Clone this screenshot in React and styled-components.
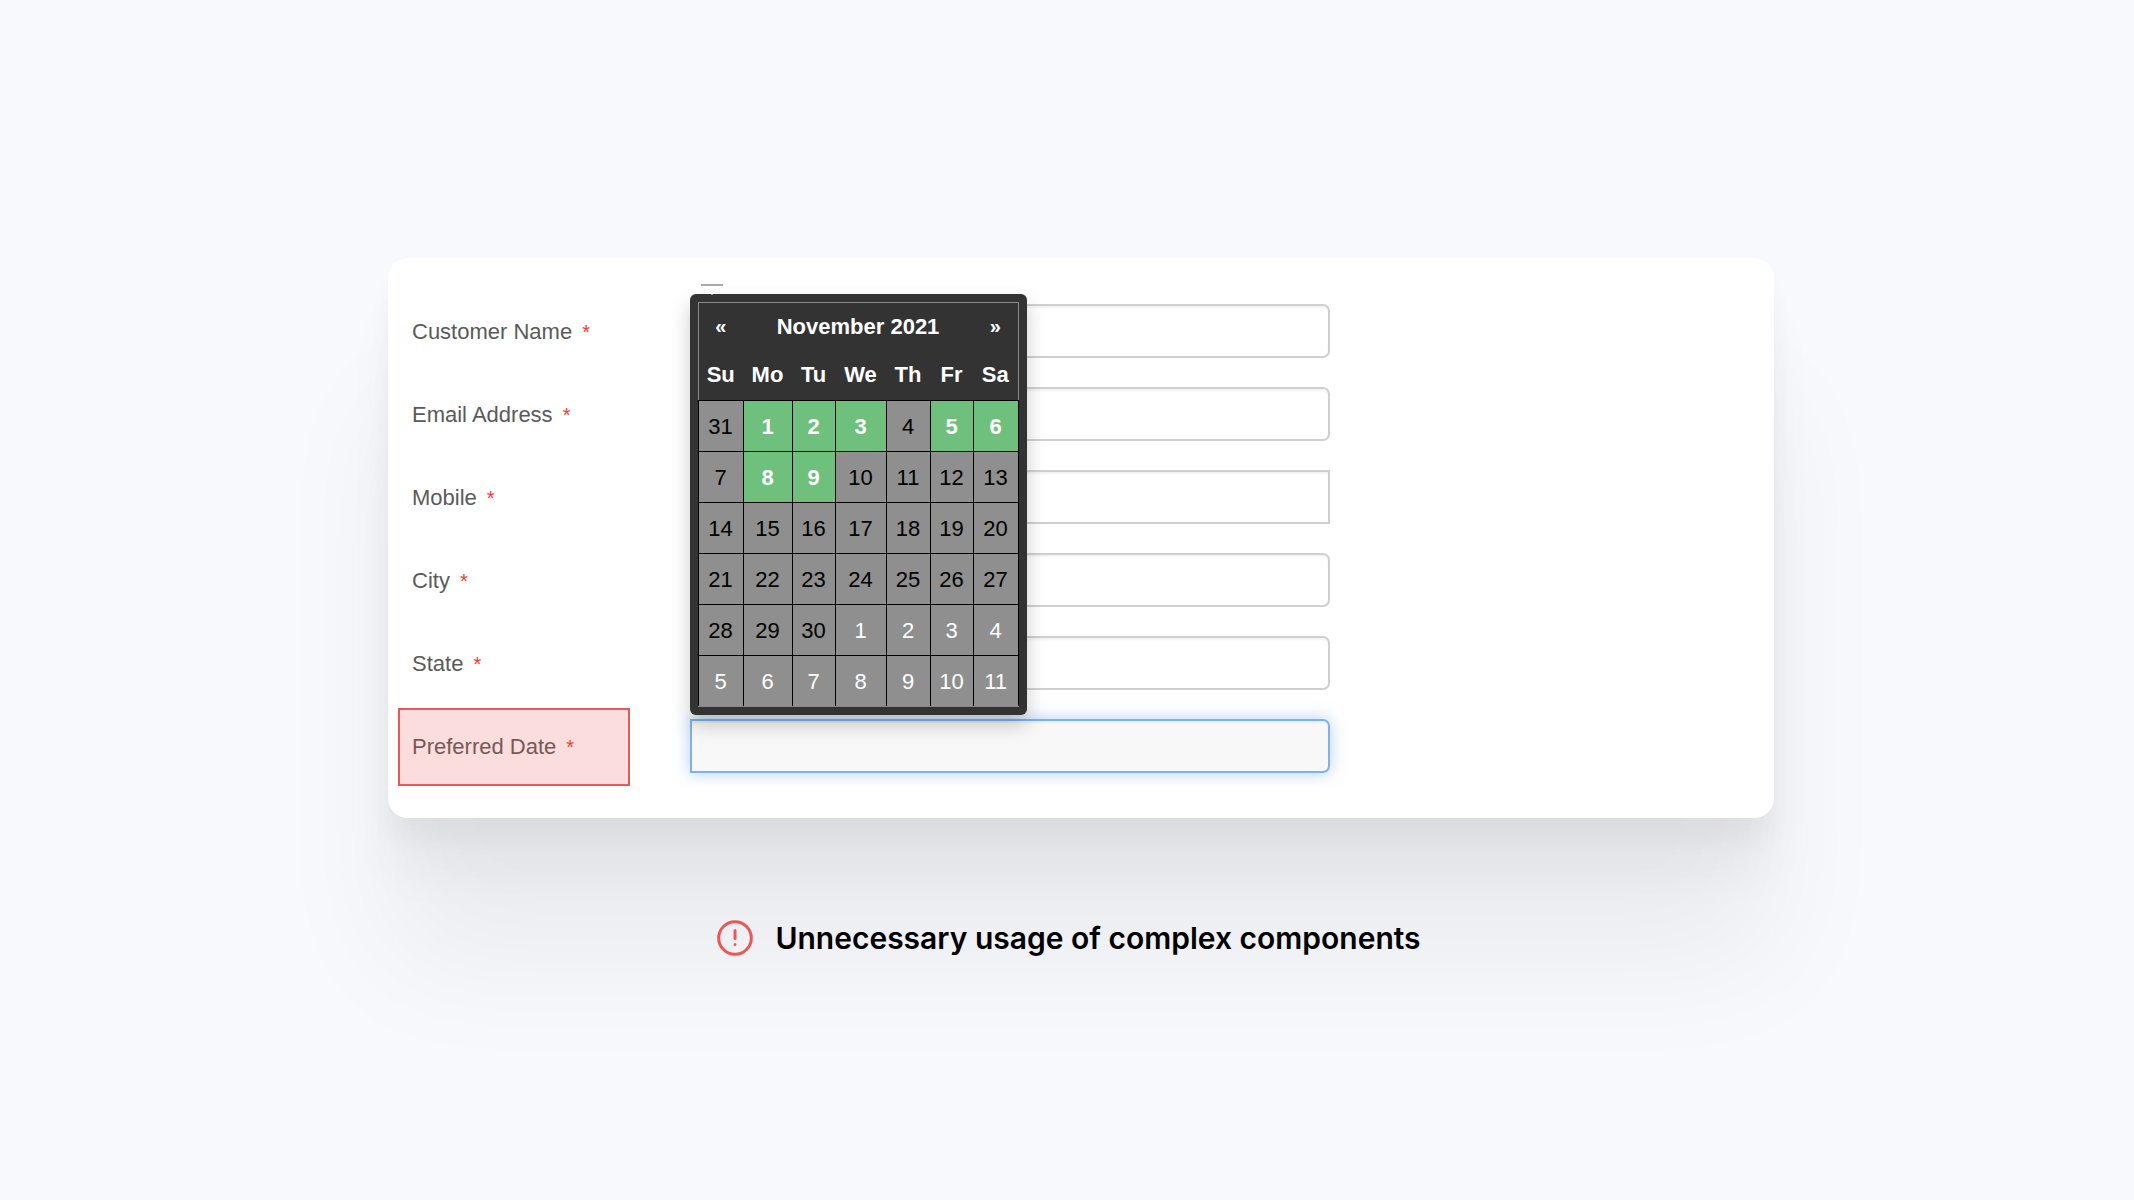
import { useState } from "react";
import styled, { createGlobalStyle, css } from "styled-components";

const FIELDS = [
  { id: "name", label: "Customer Name", type: "text" },
  { id: "email", label: "Email Address", type: "email" },
  { id: "mobile", label: "Mobile", type: "tel", square: true },
  { id: "city", label: "City", type: "text" },
  { id: "state", label: "State", type: "text" },
  { id: "date", label: "Preferred Date", type: "text", active: true },
];

const WEEKDAYS = [
  { name: "Su", width: 45 },
  { name: "Mo", width: 49 },
  { name: "Tu", width: 43 },
  { name: "We", width: 51 },
  { name: "Th", width: 44 },
  { name: "Fr", width: 43 },
  { name: "Sa", width: 45 },
];

const WEEKS = [
  [31, 1, 2, 3, 4, 5, 6],
  [7, 8, 9, 10, 11, 12, 13],
  [14, 15, 16, 17, 18, 19, 20],
  [21, 22, 23, 24, 25, 26, 27],
  [28, 29, 30, 1, 2, 3, 4],
  [5, 6, 7, 8, 9, 10, 11],
];

const OPEN_DAYS = [1, 2, 3, 5, 6, 8, 9];

const getStatus = (week, day) => {
  if (week >= 4 && day < 20) return "next";
  if (week < 2 && OPEN_DAYS.includes(day)) return "open";
  return "closed";
};

const Calendar = ({ onSelect }) => {
  return (
    <Popup>
      <Arrow viewBox="0 0 22 11" aria-hidden="true">
        <path d="M0 1L11 11L22 1Z" fill="#fff" />
        <path d="M0 1H22" stroke="#aaa" strokeWidth="2" />
      </Arrow>
      <Table>
        <colgroup>
          {WEEKDAYS.map(({ name, width }) => (
            <Col key={name} $width={width} />
          ))}
        </colgroup>
        <thead>
          <tr>
            <HeadCell>
              <BtnNav type="button">«</BtnNav>
            </HeadCell>
            <HeadCell colSpan={5}>November 2021</HeadCell>
            <HeadCell>
              <BtnNav type="button">»</BtnNav>
            </HeadCell>
          </tr>
          <tr>
            {WEEKDAYS.map(({ name }) => (
              <HeadCell key={name}>{name}</HeadCell>
            ))}
          </tr>
        </thead>
        <tbody>
          {WEEKS.map((days, week) => (
            <tr key={week}>
              {days.map((day) => {
                const status = getStatus(week, day);
                return (
                  <DayCell key={day} $status={status}>
                    <BtnDay
                      type="button"
                      onClick={() => {
                        if (status === "open") onSelect(`11/${day}/2021`);
                      }}
                    >
                      {day}
                    </BtnDay>
                  </DayCell>
                );
              })}
            </tr>
          ))}
        </tbody>
      </Table>
    </Popup>
  );
};

const App = () => {
  const [values, setValues] = useState({});

  const setValue = (id, value) => {
    setValues((prev) => ({ ...prev, [id]: value }));
  };

  return (
    <>
      <GlobalStyle />
      <Page>
        <Card>
          {FIELDS.map(({ id, label, type, square, active }) => (
            <Row key={id}>
              <Label htmlFor={id} $marked={active}>
                {label}
                <Required>*</Required>
              </Label>
              <Control>
                <Input
                  id={id}
                  type={type}
                  value={values[id] || ""}
                  onChange={(e) => setValue(id, e.target.value)}
                  $square={square}
                  $active={active}
                />
                {active && (
                  <Calendar onSelect={(value) => setValue(id, value)} />
                )}
              </Control>
            </Row>
          ))}
        </Card>
        <Caption>
          <AlertIcon viewBox="0 0 36 36" aria-hidden="true">
            <circle cx="18" cy="18" r="16.3" />
            <path d="M18 10.5V18.5M18 24.5V24.6" />
          </AlertIcon>
          Unnecessary usage of complex components
        </Caption>
      </Page>
    </>
  );
};

const GlobalStyle = createGlobalStyle`
  *,
  *::after {
    box-sizing: border-box;
  }
  body {
    margin: 0;
    background: #f8f9fd;
    font-family: "Liberation Sans", Arial, sans-serif;
    font-size: 22px;
  }
`;
const Page = styled.main`
  min-height: 100vh;
  padding: 258px 0 40px;
`;
const Card = styled.form`
  display: flex;
  flex-direction: column;
  gap: 29px;
  margin: 0 360px 0 388px;
  padding: 46px 24px 45px;
  border-radius: 20px;
  background: #fff;
  box-shadow:
    0 144px 124px rgba(0, 0, 0, 0.055),
    0 56px 50px rgba(0, 0, 0, 0.035),
    0 22px 22px rgba(0, 0, 0, 0.035);
`;
const Row = styled.div`
  display: flex;
`;
const Label = styled.label`
  position: relative;
  display: flex;
  align-items: center;
  width: 278px;
  height: 54px;
  padding-top: 2px;
  color: #5a5a5a;

  ${({ $marked }) =>
    $marked &&
    css`
      &::after {
        content: "";
        position: absolute;
        top: -11px;
        left: -14px;
        width: 232px;
        height: 78px;
        border: 2px solid #eb5757;
        background: rgba(235, 87, 87, 0.2);
      }
    `}
`;
const Required = styled.span`
  margin-left: 10px;
  color: #f33a30;
  font-size: 20px;
`;
const Control = styled.div`
  position: relative;
  flex: 0 1 640px;
`;
const Input = styled.input`
  display: block;
  width: 100%;
  height: 54px;
  padding: 0 14px;
  border: 2px solid #d0d0d0;
  border-radius: ${({ $square }) => ($square ? "0" : "0 7px 7px 0")};
  background: #fff;
  box-shadow: inset 0 2px 2px rgba(0, 0, 0, 0.05);
  color: #5a5a5a;
  font: inherit;
  outline: none;

  ${({ $active }) =>
    $active &&
    css`
      border-color: #7fb2ea;
      background: #f8f8f8;
      box-shadow:
        inset 0 2px 2px rgba(0, 0, 0, 0.05),
        0 0 16px rgba(102, 160, 233, 0.5);
    `}
`;
const Popup = styled.div`
  position: absolute;
  bottom: 58px;
  left: 0;
  z-index: 1;
  padding: 8px;
  border-radius: 6px;
  background: #333;
  box-shadow: 0 10px 20px rgba(0, 0, 0, 0.2);
`;
const Arrow = styled.svg`
  position: absolute;
  top: -10px;
  left: 11px;
  width: 22px;
  height: 11px;
`;
const Table = styled.table`
  table-layout: fixed;
  width: 321px;
  border: 1px solid #888;
  border-collapse: collapse;
`;
const Col = styled.col`
  width: ${({ $width }) => $width}px;
`;
const HeadCell = styled.th`
  height: 49px;
  padding: 0 1px 1px 0;
  color: #fff;
  font-weight: bold;
`;
const DayCell = styled.td`
  height: 51px;
  padding: 1px 1px 0 0;
  border: 1px solid #000;
  background: ${({ $status }) => ($status === "open" ? "#6fc07c" : "#8f8f8f")};
  color: ${({ $status }) => ($status === "closed" ? "#000" : "#fff")};
  font-weight: ${({ $status }) => ($status === "open" ? "bold" : "normal")};

  tr:last-child > & {
    border-bottom-color: #888;
  }
`;
const BtnDay = styled.button`
  display: block;
  width: 100%;
  padding: 0;
  border: none;
  background: none;
  color: inherit;
  font: inherit;
  text-align: center;
  cursor: pointer;
`;
const BtnNav = styled(BtnDay)`
  font-size: 20px;
`;
const Caption = styled.p`
  display: flex;
  align-items: center;
  justify-content: center;
  gap: 22px;
  margin: 100px 0 0;
  padding-left: 4px;
  color: #000;
  font-family: Inter, sans-serif;
  font-size: 30px;
  font-weight: 600;
  line-height: 40px;
`;
const AlertIcon = styled.svg`
  width: 36px;
  height: 36px;
  fill: none;
  stroke: #eb5757;
  stroke-width: 3;
  stroke-linecap: round;
`;

export default App;
